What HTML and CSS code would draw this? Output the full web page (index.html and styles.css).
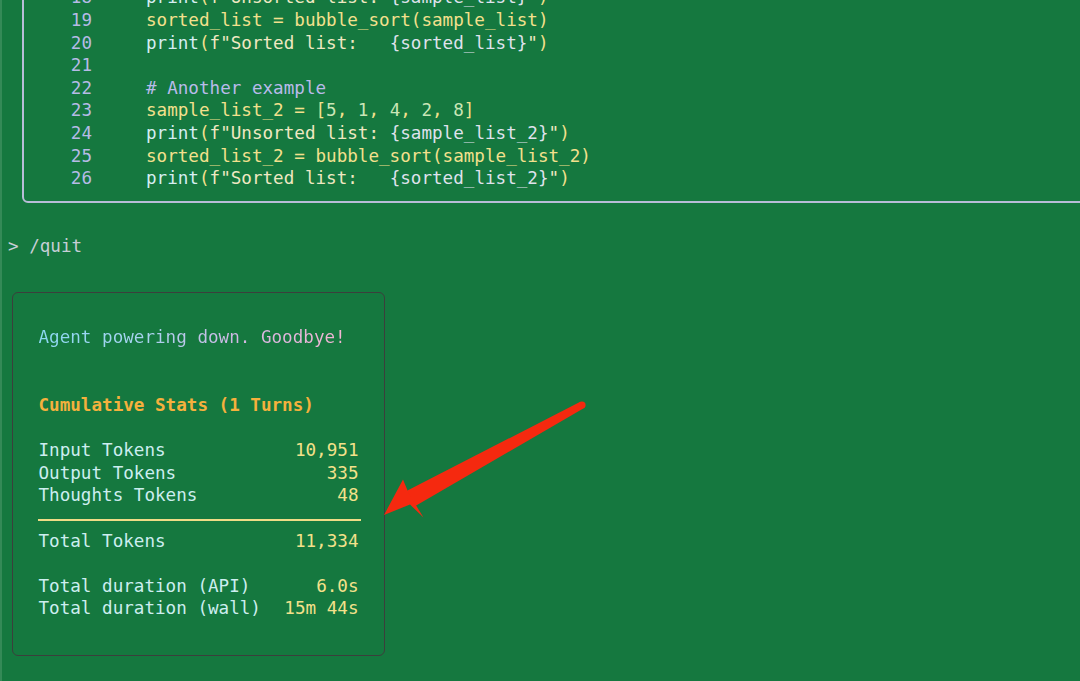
FILE: index.html
```html
<!DOCTYPE html>
<html lang="en">
<head>
<meta charset="utf-8">
<title>Terminal</title>
<link rel="stylesheet" href="styles.css">
</head>
<body>
<div class="term">
  <div class="code-box">
    <div class="ln"><span class="num">18</span><span class="code"><span class="fn">print</span><span class="y">(</span><span class="str">f"Unsorted list: </span><span class="var">{sample_list}</span><span class="str">"</span><span class="y">)</span></span></div>
    <div class="ln"><span class="num">19</span><span class="code y">sorted_list = bubble_sort(sample_list)</span></div>
    <div class="ln"><span class="num">20</span><span class="code"><span class="fn">print</span><span class="y">(</span><span class="str">f"Sorted list:   </span><span class="var">{sorted_list}</span><span class="str">"</span><span class="y">)</span></span></div>
    <div class="ln"><span class="num">21</span><span class="code"></span></div>
    <div class="ln"><span class="num">22</span><span class="code cm"># Another example</span></div>
    <div class="ln"><span class="num">23</span><span class="code y">sample_list_2 = [<span class="n">5</span>, <span class="n">1</span>, <span class="n">4</span>, <span class="n">2</span>, <span class="n">8</span>]</span></div>
    <div class="ln"><span class="num">24</span><span class="code"><span class="fn">print</span><span class="y">(</span><span class="str">f"Unsorted list: </span><span class="var">{sample_list_2}</span><span class="str">"</span><span class="y">)</span></span></div>
    <div class="ln"><span class="num">25</span><span class="code y">sorted_list_2 = bubble_sort(sample_list_2)</span></div>
    <div class="ln"><span class="num">26</span><span class="code"><span class="fn">print</span><span class="y">(</span><span class="str">f"Sorted list:   </span><span class="var">{sorted_list_2}</span><span class="str">"</span><span class="y">)</span></span></div>
  </div>

  <div class="prompt">&gt; /quit</div>

  <div class="stats-box">
    <div class="row"><span class="bye">Agent powering down. Goodbye!</span></div>
    <div class="blank"></div>
    <div class="blank"></div>
    <div class="row title">Cumulative Stats (1 Turns)</div>
    <div class="blank"></div>
    <div class="row kv"><span class="k">Input Tokens</span><span class="v">10,951</span></div>
    <div class="row kv"><span class="k">Output Tokens</span><span class="v">335</span></div>
    <div class="row kv"><span class="k">Thoughts Tokens</span><span class="v">48</span></div>
    <div class="sep"></div>
    <div class="row kv"><span class="k">Total Tokens</span><span class="v">11,334</span></div>
    <div class="blank"></div>
    <div class="row kv"><span class="k">Total duration (API)</span><span class="v">6.0s</span></div>
    <div class="row kv"><span class="k">Total duration (wall)</span><span class="v">15m 44s</span></div>
  </div>

  <svg class="arrow" width="1080" height="681" viewBox="0 0 1080 681" aria-hidden="true">
    <circle cx="582" cy="433" r="3.6" fill="#f5290f"/>
    <polygon fill="#f5290f" points="580.3,429.8 583.7,436.2 414.5,534.5 405.5,519.5"/>
    <polygon fill="#f5290f" points="384,543 403,507.5 409,522 423.5,545.5 410,532.5"/>
  </svg>
</div>
</body>
</html>
```

FILE: styles.css
```css
* { box-sizing: border-box; }

html, body {
  margin: 0;
  padding: 0;
  height: 100%;
  overflow: hidden;
}

body {
  background: #15783f;
  border-left: 2px solid #348a57;
  font-family: "DejaVu Sans Mono", "Liberation Mono", monospace;
  font-size: 17.6px;
  line-height: 22.6px;
  color: #d6ecf0;
}

.term {
  position: relative;
  height: 100%;
}

.code-box {
  margin-top: -27.6px;
  margin-left: 20px;
  width: 1200px;
  border: 2px solid #b8bdd8;
  border-radius: 6px;
  padding: 12px 0 11px;
}

.ln {
  display: flex;
  height: 22.6px;
  white-space: pre;
}

.num {
  width: 68px;
  text-align: right;
  color: #b6bbe6;
  flex: none;
}

.code {
  padding-left: 54px;
  white-space: pre;
}

.y { color: #f3e08d; }
.fn { color: #d6eef2; }
.str { color: #efe8c2; }
.var { color: #dfe2ec; }
.cm { color: #b9bbea; }
.n { color: #c9e6b6; }

.prompt {
  margin-top: 32px;
  padding-left: 6px;
  color: #c6ced6;
  white-space: pre;
}

.stats-box {
  margin-top: 34.7px;
  margin-left: 10px;
  width: 373px;
  border: 1.5px solid #3b3f3c;
  border-radius: 6px;
  padding: 33.2px 23.5px 35px 24.5px;
}

.row {
  height: 22.6px;
  white-space: pre;
  padding-left: 1px;
}

.blank { height: 22.6px; }

.bye {
  background: linear-gradient(90deg, #8cd8f2 0%, #a9d2ee 35%, #d2b8e4 65%, #f3b6d2 100%);
  -webkit-background-clip: text;
  background-clip: text;
  color: transparent;
}

.title {
  color: #f5b13d;
  font-weight: bold;
}

.kv {
  display: flex;
  justify-content: space-between;
  padding-right: 2px;
}

.k { color: #cdeef0; }
.v { color: #f3e18b; }

.sep {
  height: 22.6px;
  padding-top: 12px;
}

.sep::before {
  content: "";
  display: block;
  height: 2px;
  background: #efdc86;
}

.arrow {
  position: absolute;
  left: -2px;
  top: 0;
  pointer-events: none;
}
```
